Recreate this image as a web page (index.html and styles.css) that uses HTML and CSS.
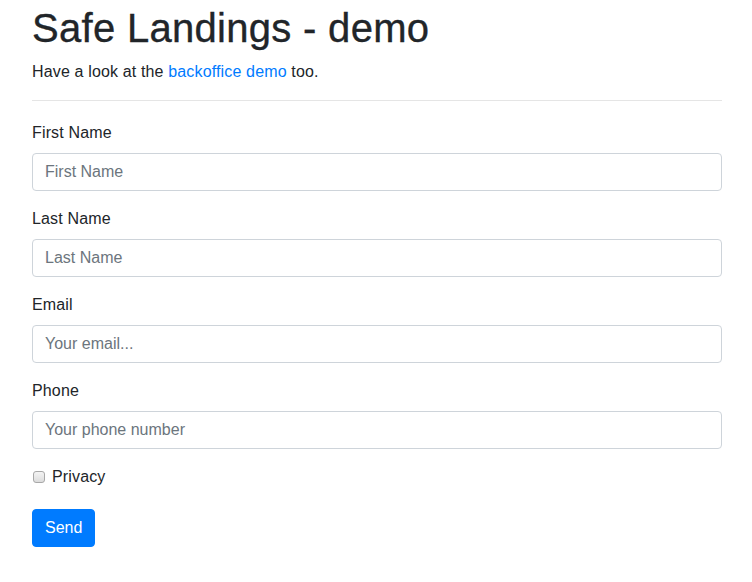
FILE: index.html
```html
<!DOCTYPE html>
<html lang="en">
<head>
<meta charset="utf-8">
<title>Safe Landings - demo</title>
<link rel="stylesheet" href="styles.css">
</head>
<body>
<div class="container">
  <h1 class="title">Safe Landings - demo</h1>
  <p class="lead-text">Have a look at the <a href="#" class="link">backoffice demo</a> too.</p>
  <hr class="divider">
  <form class="form">
    <div class="form-group">
      <label class="label" for="fn">First Name</label>
      <input class="input" id="fn" type="text" placeholder="First Name">
    </div>
    <div class="form-group">
      <label class="label" for="ln">Last Name</label>
      <input class="input" id="ln" type="text" placeholder="Last Name">
    </div>
    <div class="form-group">
      <label class="label" for="em">Email</label>
      <input class="input" id="em" type="email" placeholder="Your email...">
    </div>
    <div class="form-group">
      <label class="label" for="ph">Phone</label>
      <input class="input" id="ph" type="text" placeholder="Your phone number">
    </div>
    <div class="form-check">
      <input class="check" id="pv" type="checkbox">
      <label class="check-label" for="pv">Privacy</label>
    </div>
    <button class="btn" type="button">Send</button>
  </form>
</div>
</body>
</html>
```
FILE: styles.css
```css
* { box-sizing: border-box; }
html, body { margin: 0; padding: 0; background: #fff; }
body {
  font-family: "Liberation Sans", Arial, sans-serif;
  font-size: 16px;
  line-height: 1.5;
  letter-spacing: 0.15px;
  color: #212529;
}
.container {
  padding: 4px 30px 0 32px;
}
.title {
  margin: 0 0 8px;
  font-size: 40px;
  font-weight: 400;
  line-height: 1.2;
  letter-spacing: 0.3px;
  -webkit-text-stroke: 0.35px #212529;
}
.lead-text { margin: 0 0 16px; }
.link { color: #007bff; text-decoration: none; }
.divider {
  margin: 16px 0 20px;
  border: 0;
  border-top: 1px solid rgba(0,0,0,.1);
}
.form { display: flex; flex-direction: column; align-items: flex-start; }
.form-group { margin-bottom: 16px; width: 100%; display: flex; flex-direction: column; }
.label { margin-bottom: 8px; display: block; }
.input {
  width: 100%;
  height: 38px;
  padding: 6px 12px;
  font: inherit;
  color: #495057;
  border: 1px solid #ced4da;
  border-radius: 4px;
  background: #fff;
  outline: none;
}
.input::placeholder { color: #6c757d; opacity: 1; }
.form-check {
  display: flex;
  align-items: center;
  gap: 7px;
  margin-bottom: 20px;
  padding-left: 1px;
}
.check {
  appearance: none;
  -webkit-appearance: none;
  margin: 0;
  width: 12px;
  height: 12px;
  border: 1px solid #a8a8a8;
  border-radius: 3px;
  background: linear-gradient(#f4f4f4, #dcdcdc);
}
.btn {
  font: inherit;
  color: #fff;
  background: #007bff;
  border: 1px solid #007bff;
  border-radius: 4px;
  padding: 6px 12px;
  height: 38px;
  line-height: 1.5;
}
```
